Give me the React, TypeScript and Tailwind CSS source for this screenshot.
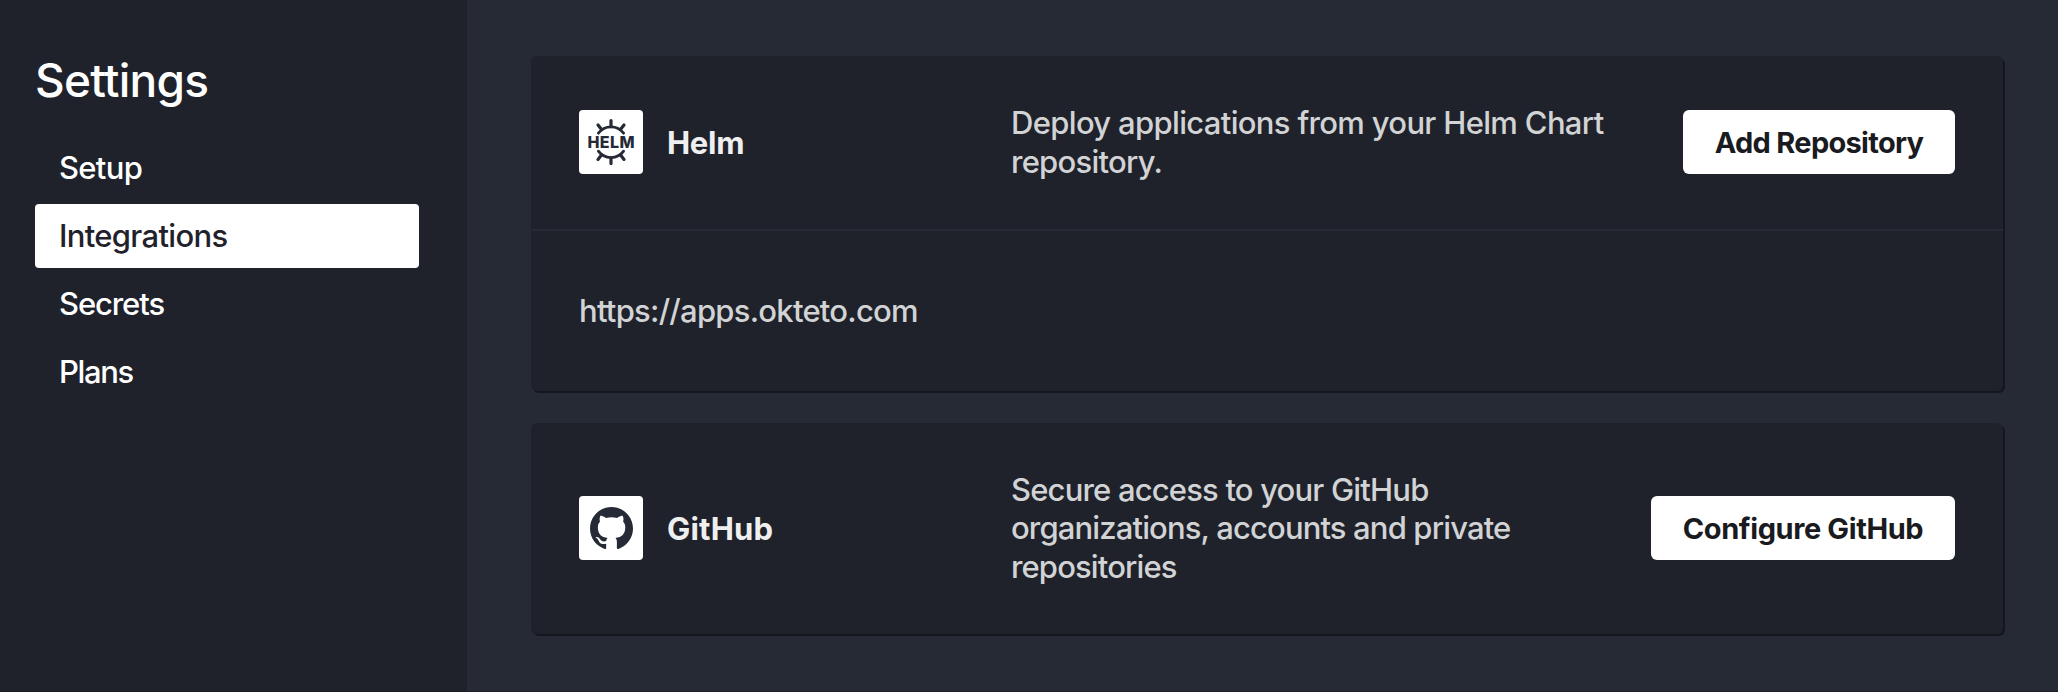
import type { ReactNode } from "react";

function HelmLogo() {
  return (
    <svg viewBox="0 0 64 64" className="size-16" fill="none" stroke="#252a36" strokeWidth="2.8" strokeLinecap="round">
      <path d="M19.4 23.2a15.6 15.6 0 0 1 25.2 0" />
      <path d="M19.4 41.2a15.6 15.6 0 0 0 25.2 0" />
      <path strokeWidth="3.2" d="M32 10.6v6M32 47.8v5.8M19 15l3.6 4.6M45 15l-3.6 4.6M19 49.4l3.6-4.6M45 49.4l-3.6-4.6" />
      <text
        x="8.4"
        y="38.4"
        textLength="47.2"
        fill="#252a36"
        stroke="none"
        className="font-['Inter'] text-[16px] font-extrabold"
      >
        HELM
      </text>
    </svg>
  );
}

function GitHubLogo() {
  return (
    <svg viewBox="0 0 16 16" className="size-[43px]" fill="#252a36">
      <path d="M8 0C3.58 0 0 3.58 0 8c0 3.54 2.29 6.53 5.47 7.59.4.07.55-.17.55-.38 0-.19-.01-.82-.01-1.49-2.01.37-2.53-.49-2.69-.94-.09-.23-.48-.94-.82-1.13-.28-.15-.68-.52-.01-.53.63-.01 1.08.58 1.23.82.72 1.21 1.87.87 2.33.66.07-.52.28-.87.51-1.07-1.78-.2-3.64-.89-3.64-3.95 0-.87.31-1.59.82-2.15-.08-.2-.36-1.02.08-2.12 0 0 .67-.21 2.2.82.64-.18 1.32-.27 2-.27s1.36.09 2 .27c1.53-1.04 2.2-.82 2.2-.82.44 1.1.16 1.92.08 2.12.51.56.82 1.27.82 2.15 0 3.07-1.87 3.75-3.65 3.95.29.25.54.73.54 1.48 0 1.07-.01 1.93-.01 2.2 0 .21.15.46.55.38A8.01 8.01 0 0 0 16 8c0-4.42-3.58-8-8-8" />
    </svg>
  );
}

const NAV = [
  { label: "Setup", tracking: "tracking-[-0.7px]" },
  { label: "Integrations", tracking: "tracking-[-0.68px]", active: true },
  { label: "Secrets", tracking: "tracking-[-1.1px]" },
  { label: "Plans", tracking: "tracking-[-1.35px]" },
];

function Sidebar() {
  return (
    <aside className="w-[467px] shrink-0 bg-[#1f222b] pl-[35px] pr-12 pt-[50px]">
      <h1 className="h-[60px] text-[46px] leading-[60px] tracking-[-0.75px] text-white">Settings</h1>
      <nav className="mt-[26px] flex flex-col gap-1">
        {NAV.map((item) => (
          <a
            key={item.label}
            className={`flex h-16 items-center rounded-[4px] pl-6 ${item.tracking} ${
              item.active ? "bg-white text-[#1f222b]" : "text-white"
            }`}
          >
            {item.label}
          </a>
        ))}
      </nav>
    </aside>
  );
}

function Card({ children }: { children: ReactNode }) {
  return (
    <section className="rounded-[6px] bg-[#1f222b] shadow-[2px_2px_0_#15171e]">{children}</section>
  );
}

type IntegrationProps = {
  logo: ReactNode;
  name: ReactNode;
  action: ReactNode;
  actionClass: string;
  className: string;
  children: ReactNode;
};

function Integration({ logo, name, action, actionClass, className, children }: IntegrationProps) {
  return (
    <div className={`flex items-center px-12 pb-px ${className}`}>
      <div className="flex w-[432px] shrink-0 items-center gap-6">
        <div className="flex size-16 items-center justify-center rounded-[4px] bg-white">{logo}</div>
        <h2 className="pt-px font-bold text-[#efeff0]">{name}</h2>
      </div>
      <p className="flex-1 whitespace-nowrap pt-px leading-[38.4px] text-[#d2d3d5]">{children}</p>
      <button
        className={`flex h-16 shrink-0 items-center justify-center whitespace-nowrap rounded-[6px] bg-white pt-0.5 text-[29px] font-[650] text-[#1a1b21] ${actionClass}`}
      >
        {action}
      </button>
    </div>
  );
}

export default function App() {
  return (
    <div className="flex h-[692px] w-full overflow-hidden border-b border-[#1e1b27] bg-[#252a35] font-['Inter',sans-serif] text-[31px] font-[450] leading-10">
      <Sidebar />
      <main className="flex flex-1 flex-col gap-8 pl-16 pr-[55px] pt-14">
        <Card>
          <Integration
            className="h-[173px]"
            logo={<HelmLogo />}
            name={<span className="tracking-[-0.3px]">Helm</span>}
            action="Add Repository"
            actionClass="w-[272px] tracking-[-0.7px]"
          >
            <span className="tracking-[-0.67px]">Deploy applications from your Helm Chart</span>
            <br />
            <span className="tracking-[-0.75px]">repository.</span>
          </Integration>
          <div className="flex h-[162px] items-center border-t-2 border-[#252a35] px-12 tracking-[-0.75px] text-[#d2d3d5]">
            https://apps.okteto.com
          </div>
        </Card>
        <Card>
          <Integration
            className="h-[211px]"
            logo={<GitHubLogo />}
            name={<span className="tracking-[0.2px]">GitHub</span>}
            action="Configure GitHub"
            actionClass="w-[304px] tracking-[-0.4px]"
          >
            <span className="tracking-[-0.82px]">Secure access to your GitHub</span>
            <br />
            <span className="tracking-[-0.86px]">organizations, accounts and private</span>
            <br />
            <span className="tracking-[-0.87px]">repositories</span>
          </Integration>
        </Card>
      </main>
    </div>
  );
}
